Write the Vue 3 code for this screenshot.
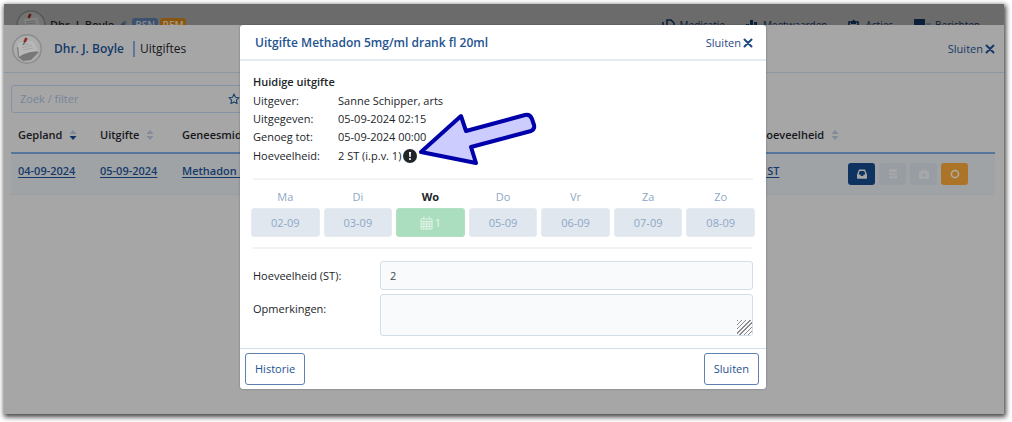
<script setup>
import { ref } from 'vue'

const filter = ref('')
const amount = ref('2')
const remarks = ref('')

const details = [
  { label: 'Uitgever:', value: 'Sanne Schipper, arts' },
  { label: 'Uitgegeven:', value: '05-09-2024 02:15' },
  { label: 'Genoeg tot:', value: '05-09-2024 00:00' },
  { label: 'Hoeveelheid:', value: '2 ST (i.p.v. 1)', warn: true },
]

const days = [
  { name: 'Ma', date: '02-09' },
  { name: 'Di', date: '03-09' },
  { name: 'Wo', date: '1', active: true },
  { name: 'Do', date: '05-09' },
  { name: 'Vr', date: '06-09' },
  { name: 'Za', date: '07-09' },
  { name: 'Zo', date: '08-09' },
]

const columns = [
  { title: 'Gepland', cls: 'c-date', sorted: true },
  { title: 'Uitgifte', cls: 'c-date' },
  { title: 'Geneesmiddel', cls: 'c-drug' },
  { title: 'Hoeveelheid', cls: 'c-amount' },
]
</script>

<template>
  <div class="frame">
    <header class="topbar">
      <div class="topbar-row">
        <svg class="avatar" viewBox="0 0 30 30" aria-hidden="true">
          <circle cx="15" cy="15" r="14" fill="#747474" stroke="#595959" stroke-width="1.5" />
          <path d="M8 9l14-2 2 12-14 3z" fill="#808080" />
          <path d="M10 12l9-1M10 14l10-1" stroke="#666" stroke-width="1" />
          <path d="M14.500 4l-2 4" stroke="#5c1c14" stroke-width="2.5" />
        </svg>
        <span class="top-name">Dhr. J. Boyle</span>
        <svg class="pencil" viewBox="0 0 10 10" aria-hidden="true">
          <path d="M1 9l.6-3L6 1.500 8.500 4 4 8.400zM6.600 1l.8-.8L9.800 2.600l-.8.800z" fill="#33465e" />
        </svg>
        <span class="tag tag-blue">BSN</span>
        <span class="tag tag-orange">REM</span>
        <nav class="top-nav">
          <a href="#"><svg viewBox="0 0 14 12"><path d="M1 3v8h6M5 1h4l3 3v6H5z" fill="none" stroke="#0b1f3a" stroke-width="1.6" /></svg>Medicatie</a>
          <a href="#"><svg viewBox="0 0 14 12"><path d="M1 5h3v6H1zM5 1h3v10H5zM9 3h3v8H9z" fill="#0b1f3a" /></svg>Meetwaarden</a>
          <a href="#"><svg viewBox="0 0 14 12"><path d="M2 3h9v8H2z" fill="none" stroke="#0b1f3a" stroke-width="1.600" /><path d="M4 2h1.500a1.200 1.200 0 0 1 2.400 0H9v3H4z" fill="#0b1f3a" /></svg>Acties</a>
          <a href="#"><svg class="wide" viewBox="0 0 18 12"><path d="M1 0h11v9H4l-3 2z" fill="#0b1f3a" /><path d="M13 5h5M13 7h5" stroke="#33465e" /></svg>Berichten</a>
        </nav>
      </div>
    </header>

    <main class="panel">
      <div class="panel-head">
        <svg class="avatar" viewBox="0 0 30 30" aria-hidden="true">
          <circle cx="15" cy="15" r="14.200" fill="#adadad" stroke="#8c8c8c" stroke-width="1.500" />
          <path d="M5 13l1 10 5 4 8-1 8-8z" fill="#787878" />
          <path d="M6 9l15-2 5 10c-6 1-12 1-19 6z" fill="#b8b8b8" />
          <path d="M9 11l8-1M10 13.500l10-2M11 16l10-2" stroke="#999" stroke-width=".7" />
          <path d="M14.500 4l-2 4" stroke="#94291c" stroke-width="2.600" />
          <path d="M12.500 8l-1 2.500" stroke="#444" stroke-width="1" />
        </svg>
        <strong class="patient">Dhr. J. Boyle</strong>
        <h1 class="section">Uitgiftes</h1>
        <button type="button" class="close close-dim">
          Sluiten
          <svg viewBox="0 0 10 10" aria-hidden="true"><path d="M1.500 1.500l7 7M8.500 1.500l-7 7" /></svg>
        </button>
      </div>

      <div class="search">
        <input v-model="filter" type="text" placeholder="Zoek / filter" aria-label="Zoek / filter" />
        <svg viewBox="0 0 12 12" aria-hidden="true">
          <path d="M6 1l1.500 3.300 3.500.400-2.600 2.400.7 3.500L6 8.900l-3.100 1.700.7-3.500L1 4.700l3.500-.4z" fill="none" stroke="#1b416f" stroke-width="1.100" stroke-linejoin="round" />
        </svg>
      </div>

      <table class="grid">
        <thead>
          <tr>
            <th v-for="c in columns" :key="c.title" :class="c.cls" scope="col">
              <span class="th">
                {{ c.title }}
                <svg viewBox="0 0 8 12" aria-hidden="true">
                  <path d="M4 1l3.500 4h-7z" fill="#818b99" />
                  <path d="M4 11l3.500-4h-7z" :fill="c.sorted ? '#0f3361' : '#818b99'" />
                </svg>
              </span>
            </th>
            <td class="c-actions"></td>
          </tr>
        </thead>
        <tbody>
          <tr>
            <td><a href="#">04-09-2024</a></td>
            <td><a href="#">05-09-2024</a></td>
            <td><a href="#">Methadon 5mg/ml drank fl 20ml</a></td>
            <td><a href="#">1 ST</a></td>
            <td>
              <div class="actions">
                <button type="button" class="act act-blue" aria-label="Uitgeven">
                  <svg viewBox="0 0 12 12"><path fill-rule="evenodd" d="M3 1.500h6l2 5V10a.8.8 0 0 1-.8.800H1.800A.8.800 0 0 1 1 10V6.500zM3.800 3L2.500 6.500h1.700l.8 1.500h2l.8-1.500h1.700L8.200 3z" fill="#a6a6a6" /></svg>
                </button>
                <button type="button" class="act" aria-label="Voorraad" disabled>
                  <svg viewBox="0 0 12 12"><path d="M2 2.200C2 .6 10 .6 10 2.200v1c0 1.400-8 1.400-8 0zM2 4.700c2 1 6 1 8 0v1.600c0 1.300-8 1.300-8 0zM2 7.800c2 1 6 1 8 0v1.700c0 1.700-8 1.700-8 0z" fill="#a6a8aa" /></svg>
                </button>
                <button type="button" class="act" aria-label="Medicatiekoffer" disabled>
                  <svg viewBox="0 0 12 12"><path fill-rule="evenodd" d="M4 3V1.200h4V3h2.300l.7.700v6.600l-.7.700H1.700L1 10.300V3.700L1.700 3zM5 3h2v-.8H5zM5.400 5v1.400H4v1.200h1.400V9h1.200V7.600H8V6.400H6.600V5z" fill="#a6a8aa" /></svg>
                </button>
                <button type="button" class="act act-orange" aria-label="Status">
                  <svg viewBox="0 0 12 12"><circle cx="6" cy="6" r="3.600" fill="none" stroke="#b0aca6" stroke-width="1.500" /></svg>
                </button>
              </div>
            </td>
          </tr>
        </tbody>
      </table>
    </main>

    <div class="overlay">
      <section class="modal" role="dialog" aria-labelledby="dlg-title">
        <div class="modal-head">
          <h2 id="dlg-title">Uitgifte Methadon 5mg/ml drank fl 20ml</h2>
          <button type="button" class="close">
            Sluiten
            <svg viewBox="0 0 10 10" aria-hidden="true"><path d="M1.500 1.500l7 7M8.500 1.500l-7 7" /></svg>
          </button>
        </div>

        <div class="modal-body">
          <h3>Huidige uitgifte</h3>
          <dl>
            <div v-for="d in details" :key="d.label">
              <dt>{{ d.label }}</dt>
              <dd>
                {{ d.value }}
                <svg v-if="d.warn" class="warn" viewBox="0 0 14 14" role="img" aria-label="Let op">
                  <circle cx="7" cy="7" r="7" fill="#212529" />
                  <path d="M6 3h2l-.3 5H6.300z" fill="#fff" />
                  <circle cx="7" cy="10" r="1.100" fill="#fff" />
                </svg>
              </dd>
            </div>
          </dl>

          <div class="days">
            <div v-for="d in days" :key="d.name" class="day" :class="{ active: d.active }">
              <span>{{ d.name }}</span>
              <button type="button">
                <svg v-if="d.active" viewBox="0 0 13 14" aria-hidden="true">
                  <path d="M1 3h11v10H1zM1 5.500h11M1 8h11M1 10.500h11M3.800 5.500V13M6.500 5.500V13M9.200 5.500V13M3.800 0.500V3M9.200 0.500V3" fill="none" stroke="#dff3e6" stroke-width="1" />
                </svg>
                {{ d.date }}
              </button>
            </div>
          </div>

          <form @submit.prevent>
            <label for="amount">Hoeveelheid (ST):</label>
            <input id="amount" v-model="amount" type="text" />
            <label for="remarks">Opmerkingen:</label>
            <textarea id="remarks" v-model="remarks"></textarea>
          </form>
        </div>

        <div class="modal-foot">
          <button type="button">Historie</button>
          <button type="button">Sluiten</button>
        </div>

        <svg class="arrow" viewBox="0 0 122 56" aria-hidden="true">
          <path d="M5 40L45 4L50 19L109 3Q114 2 116 7L118 13Q119 17 115 19L55 35L60 51Z" fill="#ccccff" stroke="#0000ab" stroke-width="4" stroke-linejoin="round" />
        </svg>
      </section>
    </div>
  </div>
</template>

<style>
body {
  background: #fff;
}
</style>

<style scoped>
* {
  box-sizing: border-box;
}

.frame {
  position: relative;
  display: flex;
  flex-direction: column;
  min-height: calc(100vh - 12px);
  margin: 4px 8px 8px 4px;
  background: #a6a6a6;
  box-shadow: 1px 2px 5px 1px rgba(0, 0, 0, 0.75);
  font-family: "Open Sans", "Noto Sans", sans-serif;
  font-size: 11px;
  line-height: 18px;
  color: #16181b;
}

button,
input,
textarea {
  font: inherit;
}

button {
  cursor: pointer;
}

.topbar {
  height: 21px;
  overflow: hidden;
  background: #6b6b6b;
}

.topbar-row {
  display: flex;
  align-items: center;
  height: 42px;
  padding: 0 24px 0 12px;
}

.avatar {
  flex: none;
  width: 30px;
  height: 30px;
}

.top-name {
  margin: 0 4px;
  font-weight: 600;
}

.pencil {
  width: 9px;
  height: 10px;
  margin-right: 5px;
}

.tag {
  width: 26px;
  margin-right: 2px;
  border-radius: 3px;
  background: #3d526e;
  color: #868b92;
  font-size: 10px;
  font-weight: 600;
  line-height: 14px;
  text-align: center;
}

.tag-orange {
  background: #8a5712;
  color: #a5987f;
}

.top-nav {
  display: flex;
  gap: 20px;
  margin-left: auto;
}

.top-nav a {
  display: flex;
  align-items: center;
  gap: 4px;
  color: #0b1f3a;
  font-size: 10px;
  text-decoration: none;
}

.top-nav svg {
  width: 14px;
  height: 12px;
}

.top-nav .wide {
  width: 18px;
}

.panel-head {
  display: flex;
  align-items: center;
  height: 48px;
  padding: 0 9px 0 8px;
  border-bottom: 1px solid #8d98a5;
}

.patient {
  margin-left: 12px;
  padding-right: 9px;
  border-right: 2px solid #57799f;
  color: #153a69;
  font-size: 12px;
  font-weight: 600;
  line-height: 16px;
}

.section {
  margin: 0 0 0 5px;
  font-size: 12px;
  font-weight: 400;
}

.close {
  display: flex;
  align-items: center;
  gap: 2px;
  margin-left: auto;
  padding: 0;
  border: 0;
  background: none;
  color: #1f4a83;
}

.close svg {
  width: 10px;
  height: 10px;
  fill: none;
  stroke: #1f4a83;
  stroke-width: 2;
  stroke-linecap: round;
}

.close-dim {
  color: #153a69;
}

.close-dim svg {
  stroke: #153a69;
}

.search {
  display: flex;
  align-items: center;
  width: 240px;
  height: 28px;
  margin: 12px 7px 0;
  padding: 0 10px 0 8px;
  border: 1px solid #8492a5;
  border-radius: 3px;
}

.search input {
  flex: 1;
  min-width: 0;
  padding: 0;
  border: 0;
  outline: 0;
  background: none;
}

.search input::placeholder {
  color: #76859a;
  opacity: 1;
}

.search svg {
  width: 12px;
  height: 12px;
}

.grid {
  width: calc(100% - 16px);
  margin: 0 7px;
  border-collapse: collapse;
  table-layout: fixed;
}

.grid th,
.grid td {
  padding: 0 7px;
  text-align: left;
  white-space: nowrap;
}

.grid thead tr {
  height: 40px;
  border-bottom: 2px solid #57749a;
}

.th {
  display: flex;
  align-items: center;
  gap: 7px;
  padding-top: 4px;
  font-weight: 600;
}

.th svg {
  flex: none;
  width: 8px;
  height: 12px;
}

.c-date {
  width: 82px;
}

.c-amount {
  width: 90px;
}

.c-actions {
  width: 154px;
}

.grid tbody tr {
  height: 41px;
  border-bottom: 1px solid #9a9fa5;
  background: #a0a3a6;
}

.grid tbody a {
  color: #153a69;
  font-weight: 600;
  text-underline-offset: 2px;
}

.grid tbody td {
  padding-bottom: 6px;
}

.grid tbody td:last-child {
  padding-bottom: 0;
}

.actions {
  display: flex;
  gap: 4px;
}

.act {
  display: grid;
  place-items: center;
  width: 27px;
  height: 22px;
  padding: 0;
  border: 0;
  border-radius: 3px;
  background: #989da3;
}

.act svg {
  width: 12px;
  height: 12px;
}

.act-blue {
  background: #0f3361;
}

.act-orange {
  background: #ab7429;
}

.overlay {
  position: absolute;
  inset: 21px 0 0;
  display: flex;
  align-items: flex-start;
  justify-content: center;
  padding-right: 2px;
}

.modal {
  position: relative;
  width: 526px;
  max-width: 100%;
  border-radius: 3px;
  background: #fff;
  box-shadow: 0 0 2px rgba(40, 60, 90, 0.5);
  color: #212529;
}

.modal-head {
  display: flex;
  align-items: center;
  height: 36px;
  padding: 1px 13px 0 15px;
  border-bottom: 2px solid #e6ebf0;
}

.modal-head h2 {
  margin: 0;
  color: #235390;
  font-size: 12px;
  font-weight: 600;
}

.modal-body {
  padding: 12px 13px;
}

h3 {
  margin: 0;
  font-size: 11px;
  font-weight: 600;
}

dl {
  margin: 1px 0 12px;
}

dl div {
  display: flex;
  height: 18px;
}

dl div:last-child {
  height: 20px;
  align-items: center;
}

dt {
  width: 85px;
}

dd {
  display: flex;
  align-items: center;
  gap: 2px;
  margin: 0;
}

.warn {
  width: 14px;
  height: 14px;
}

.days {
  display: grid;
  grid-template-columns: repeat(7, 1fr);
  gap: 4px;
  margin: 0 -2px;
  padding: 10px 0 12px;
  position: relative;
}

.days::before,
.days::after {
  content: "";
  position: absolute;
  right: 2px;
  left: 2px;
  height: 2px;
  background: #f2f3f5;
}

.days::before {
  top: 0;
}

.days::after {
  bottom: 0;
}

.day {
  display: flex;
  flex-direction: column;
  gap: 2px;
  color: #8ea7c5;
  text-align: center;
}

.day button {
  display: flex;
  align-items: center;
  justify-content: center;
  gap: 2px;
  height: 29px;
  padding: 0;
  border: 1px solid #e6ebf1;
  border-radius: 3px;
  background: #e0e7ef;
  color: #8ea7c5;
}

.day svg {
  width: 13px;
  height: 14px;
}

.active span {
  color: #212529;
  font-weight: 700;
}

.active button {
  border-color: #b2e0c3;
  background: #abdebe;
  color: #e6f6ec;
}

form {
  display: grid;
  grid-template-columns: 127px 1fr;
  row-gap: 4px;
  padding-top: 12px;
}

form label {
  padding-top: 6px;
}

form input,
form textarea {
  display: block;
  width: 100%;
  height: 29px;
  padding: 4px 9px;
  border: 1px solid #d3deea;
  border-radius: 3px;
  outline: 0;
  background: #f8fafc;
  color: #43484e;
}

form textarea {
  height: 42px;
  resize: vertical;
}

textarea::-webkit-resizer {
  background: repeating-linear-gradient(135deg, #8a8a8a 0 1px, #f8fafc 1px 3px);
  clip-path: polygon(100% 20%, 100% 100%, 20% 100%);
}

.modal-foot {
  display: flex;
  justify-content: space-between;
  padding: 4px 7px 4px 5px;
  border-top: 1px solid #d3deea;
}

.modal-foot button {
  height: 32px;
  padding: 0 9px;
  border: 1px solid #5d82b1;
  border-radius: 3px;
  background: #fff;
  color: #235390;
}

.arrow {
  position: absolute;
  top: 87px;
  left: 176px;
  width: 122px;
  height: 56px;
}
</style>
